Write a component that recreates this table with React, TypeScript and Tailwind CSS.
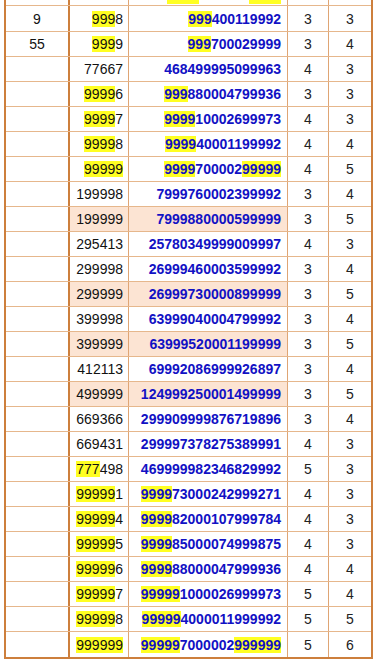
import React from "react";

type Row = {
  n: string;
  a: string;
  b: string;
  x: number;
  y: number;
  peach?: boolean;
};

// [..] marks the yellow highlighted digits
const rows: Row[] = [
  { n: "9", a: "[999]8", b: "[999]400119992", x: 3, y: 3 },
  { n: "55", a: "[999]9", b: "[999]700029999", x: 3, y: 4 },
  { n: "", a: "77667", b: "468499995099963", x: 4, y: 3 },
  { n: "", a: "[9999]6", b: "[999]880004799936", x: 3, y: 3 },
  { n: "", a: "[9999]7", b: "[9999]10002699973", x: 4, y: 3 },
  { n: "", a: "[9999]8", b: "[9999]40001199992", x: 4, y: 4 },
  { n: "", a: "[99999]", b: "[9999]700002[99999]", x: 4, y: 5 },
  { n: "", a: "199998", b: "7999760002399992", x: 3, y: 4 },
  { n: "", a: "199999", b: "7999880000599999", x: 3, y: 5, peach: true },
  { n: "", a: "295413", b: "25780349999009997", x: 4, y: 3 },
  { n: "", a: "299998", b: "26999460003599992", x: 3, y: 4 },
  { n: "", a: "299999", b: "26999730000899999", x: 3, y: 5, peach: true },
  { n: "", a: "399998", b: "63999040004799992", x: 3, y: 4 },
  { n: "", a: "399999", b: "63999520001199999", x: 3, y: 5, peach: true },
  { n: "", a: "412113", b: "69992086999926897", x: 3, y: 4 },
  { n: "", a: "499999", b: "124999250001499999", x: 3, y: 5, peach: true },
  { n: "", a: "669366", b: "299909999876719896", x: 3, y: 4 },
  { n: "", a: "669431", b: "299997378275389991", x: 4, y: 3 },
  { n: "", a: "[777]498", b: "469999982346829992", x: 5, y: 3 },
  { n: "", a: "[99999]1", b: "[9999]73000242999271", x: 4, y: 3 },
  { n: "", a: "[99999]4", b: "[9999]82000107999784", x: 4, y: 3 },
  { n: "", a: "[99999]5", b: "[9999]85000074999875", x: 4, y: 3 },
  { n: "", a: "[99999]6", b: "[9999]88000047999936", x: 4, y: 4 },
  { n: "", a: "[99999]7", b: "[99999]1000026999973", x: 5, y: 4 },
  { n: "", a: "[99999]8", b: "[99999]4000011999992", x: 5, y: 5 },
  { n: "", a: "[999999]", b: "[99999]7000002[999999]", x: 5, y: 6 },
];

function Marked({ text }: { text: string }) {
  const parts = text.split(/(\[[^\]]+\])/).filter(Boolean);
  return (
    <>
      {parts.map((p, i) =>
        p.startsWith("[") ? (
          <span key={i} className="bg-[#ffff22]">
            {p.slice(1, -1)}
          </span>
        ) : (
          <span key={i}>{p}</span>
        )
      )}
    </>
  );
}

export default function App() {
  return (
    <div
      className="bg-white w-[380px] h-[664px] overflow-hidden text-[14px] leading-[16px] text-[#111]"
      style={{ fontFamily: '"Liberation Sans", Arial, sans-serif' }}
    >
      <div className="ml-[4px] w-[369px] border-l-2 border-r-2 border-b-2 border-[#cd7f3c]">
        {/* tail of the row above, cut off by the viewport */}
        <div className="flex h-[6px] border-b border-[#e6b78c]">
          <div className="w-[64px] border-r-2 border-[#cd7f3c]" />
          <div className="w-[59px] border-r border-[#dfa574]" />
          <div className="w-[159px] border-r border-[#dfa574] flex items-start">
            <div className="ml-[38px] w-[32px] h-[4px] bg-[#ffff22]" />
            <div className="ml-[50px] w-[32px] h-[4px] bg-[#ffff22]" />
          </div>
          <div className="w-[41px] border-r border-[#dfa574]" />
          <div className="flex-1" />
        </div>

        {rows.map((r, i) => (
          <div
            key={i}
            className={`flex ${i === 0 ? "h-[26px]" : "h-[25px]"} ${
              i === rows.length - 1 ? "" : "border-b border-[#e6b78c]"
            }`}
          >
            <div className="w-[64px] border-r-2 border-[#cd7f3c] flex items-center justify-center">
              {r.n}
            </div>
            <div
              className={`w-[59px] border-r border-[#dfa574] flex items-center justify-end pr-[5px] ${
                r.peach ? "bg-[#fce4d3]" : ""
              }`}
            >
              <span>
                <Marked text={r.a} />
              </span>
            </div>
            <div
              className={`w-[159px] border-r border-[#dfa574] flex items-center justify-end pr-[6px] font-bold text-[#1111c4] ${
                r.peach ? "bg-[#fce4d3]" : ""
              }`}
            >
              <span>
                <Marked text={r.b} />
              </span>
            </div>
            <div className="w-[41px] border-r border-[#dfa574] flex items-center justify-center text-[#222]">
              {r.x}
            </div>
            <div className="flex-1 flex items-center justify-center text-[#222]">{r.y}</div>
          </div>
        ))}
      </div>
    </div>
  );
}
